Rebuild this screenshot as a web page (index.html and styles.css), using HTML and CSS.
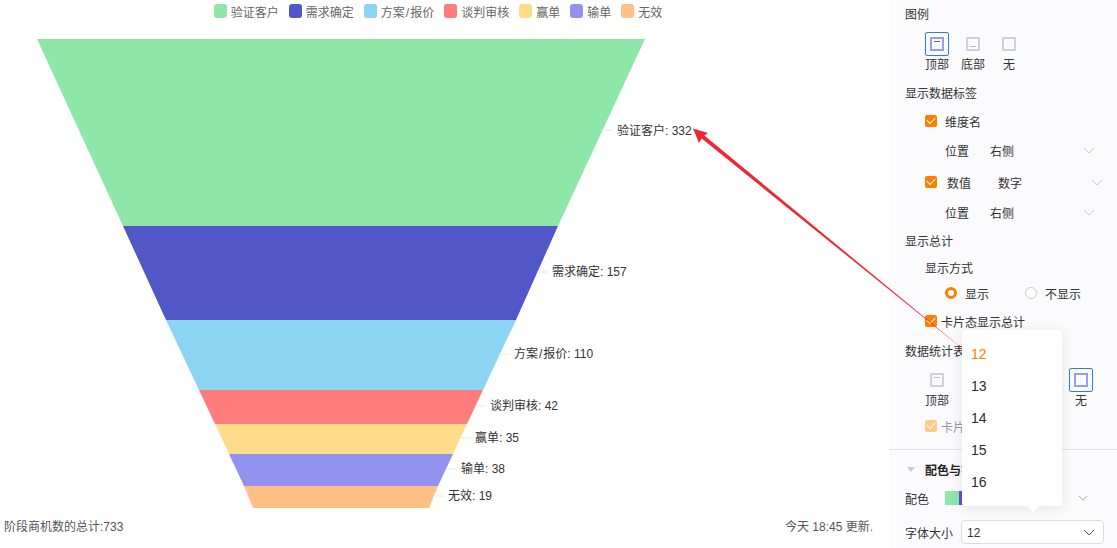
FILE: index.html
```html
<!DOCTYPE html>
<html lang="zh-CN">

<head>
  <meta charset="UTF-8">
  <meta name="viewport" content="width=device-width, initial-scale=1.0">
  <title>漏斗图设置</title>
  <link rel="stylesheet" href="styles.css">
</head>

<body>
  <div class="wrap">
    <div class="chart">
      <div class="legend">
        <div class="legend_item"><span class="dot c1"></span>验证客户</div>
        <div class="legend_item"><span class="dot c2"></span>需求确定</div>
        <div class="legend_item"><span class="dot c3"></span><span>方案<span class="slash">/</span>报价</span></div>
        <div class="legend_item"><span class="dot c4"></span>谈判审核</div>
        <div class="legend_item"><span class="dot c5"></span>赢单</div>
        <div class="legend_item"><span class="dot c6"></span>输单</div>
        <div class="legend_item"><span class="dot c7"></span>无效</div>
      </div>

      <svg class="funnel" width="889" height="488" viewBox="0 24 889 488">
        <polygon fill="#8ee6a8" points="37,39 645,39 558,226 123,226" />
        <polygon fill="#5257c8" points="123,226 558,226 516,320 166,320" />
        <polygon fill="#8bd4f2" points="166,320 516,320 483,390 199,390" />
        <polygon fill="#ff7c7c" points="199,390 483,390 467,424 215,424" />
        <polygon fill="#ffdc8a" points="215,424 467,424 453,454 229,454" />
        <polygon fill="#9193ee" points="229,454 453,454 438,486 244,486" />
        <polygon fill="#ffbf85" points="244,486 438,486 429,508 253,508" />

        <g class="leader">
          <line x1="601" y1="130" x2="612" y2="130" />
          <line x1="537" y1="272" x2="548" y2="272" />
          <line x1="499" y1="354" x2="510" y2="354" />
          <line x1="475" y1="406" x2="486" y2="406" />
          <line x1="460" y1="438" x2="471" y2="438" />
          <line x1="446" y1="469" x2="457" y2="469" />
          <line x1="433" y1="496" x2="444" y2="496" />
        </g>

        <g class="label">
          <text x="617" y="135">验证客户: 332</text>
          <text x="552" y="276">需求确定: 157</text>
          <text x="514" y="358">方案<tspan dx="1">/</tspan><tspan dx="1">报价: 110</tspan></text>
          <text x="490" y="410">谈判审核: 42</text>
          <text x="475" y="442">赢单: 35</text>
          <text x="461" y="473">输单: 38</text>
          <text x="448" y="500">无效: 19</text>
        </g>
      </svg>

      <div class="footer">
        <div>阶段商机数的总计:733</div>
        <div>今天 18:45 更新.</div>
      </div>
    </div>

    <div class="panel">
      <div class="row first">图例</div>
      <div class="pos_group">
        <div class="pos_item">
          <div class="pos_box active"><span class="pos_icon top"></span></div>顶部
        </div>
        <div class="pos_item">
          <div class="pos_box"><span class="pos_icon bottom"></span></div>底部
        </div>
        <div class="pos_item">
          <div class="pos_box"><span class="pos_icon"></span></div>无
        </div>
      </div>

      <div class="row mt6">显示数据标签</div>
      <div class="row mt1 indent"><span class="check"></span><span class="check_text">维度名</span></div>
      <div class="row mt1 indent2">
        <span class="field_name">位置</span><span>右侧</span>
        <svg class="chev" width="12" height="7" viewBox="0 0 12 7"><path d="M1 1l5 5 5-5" /></svg>
      </div>
      <div class="row mt4 indent">
        <span class="check"></span><span class="check_text wide">数值</span><span>数字</span>
        <svg class="chev far" width="12" height="7" viewBox="0 0 12 7"><path d="M1 1l5 5 5-5" /></svg>
      </div>
      <div class="row mt2 indent2">
        <span class="field_name">位置</span><span>右侧</span>
        <svg class="chev" width="12" height="7" viewBox="0 0 12 7"><path d="M1 1l5 5 5-5" /></svg>
      </div>

      <div class="row">显示总计</div>
      <div class="row back1 indent">显示方式</div>
      <div class="row back2 indent2">
        <span class="radio on"></span><span class="radio_text">显示</span>
        <span class="radio"></span><span class="radio_text">不显示</span>
      </div>
      <div class="row indent"><span class="check"></span><span class="check_text near">卡片态显示总计</span></div>

      <div class="row mt1">数据统计表格</div>
      <div class="pos_group spread">
        <div class="pos_item">
          <div class="pos_box"><span class="pos_icon top"></span></div>顶部
        </div>
        <div class="pos_item">
          <div class="pos_box"><span class="pos_icon bottom"></span></div>底部
        </div>
        <div class="pos_item">
          <div class="pos_box active"><span class="pos_icon"></span></div>无
        </div>
      </div>
      <div class="row mt4 indent muted"><span class="check light"></span><span class="check_text near">卡片态显示总计</span></div>

      <div class="divider"></div>

      <div class="row section"><span class="tri"></span>配色与字体</div>
      <div class="row mt1">
        <span class="field_name">配色</span>
        <div class="colors">
          <span class="c1"></span><span class="c2"></span><span class="c3"></span><span class="c4"></span><span class="c5"></span><span class="c6"></span><span class="c7"></span>
        </div>
        <svg class="chev color_chev" width="10" height="6" viewBox="0 0 12 7"><path d="M1 1l5 5 5-5" /></svg>
      </div>
      <div class="row mt6">
        <span class="size_name">字体大小</span>
        <div class="select"><span class="select_value">12</span>
          <svg class="chev dark" width="12" height="7" viewBox="0 0 12 7"><path d="M1 1l5 5 5-5" /></svg>
        </div>
      </div>

      <div class="popup">
        <div class="popup_item selected">12</div>
        <div class="popup_item">13</div>
        <div class="popup_item">14</div>
        <div class="popup_item">15</div>
        <div class="popup_item">16</div>
      </div>
    </div>

    <svg class="arrow" width="1117" height="548" viewBox="0 0 1117 548">
      <polygon fill="#ee2733" points="972,356.5 704.3,135.5 708,133 693,128.5 699,143 701.7,138.5" />
    </svg>
  </div>
</body>

</html>
```

FILE: styles.css
```css
* {
  box-sizing: border-box;
}

html,
body {
  margin: 0;
  height: 100%;
  overflow: hidden;
}

body {
  font-family: "Liberation Sans", "Noto Sans CJK SC", sans-serif;
  font-size: 12px;
  color: #333;
  background-color: white;
}

.wrap {
  display: flex;
  position: relative;
  width: 1117px;
  height: 548px;
  overflow: hidden;
}

.chart {
  width: 889px;
  flex-shrink: 0;
}

.legend {
  display: flex;
  justify-content: center;
  gap: 10px;
  height: 22px;
  margin-bottom: 2px;
  padding-right: 13px;
  color: #666;
}

.legend_item {
  display: flex;
  align-items: center;
  gap: 4px;
}

.slash {
  padding: 0 1px;
}

.dot {
  width: 13px;
  height: 14px;
  border-radius: 3px;
}

.c1 { background-color: #8ee6a8; }
.c2 { background-color: #5257c8; }
.c3 { background-color: #8bd4f2; }
.c4 { background-color: #ff7c7c; }
.c5 { background-color: #ffdc8a; }
.c6 { background-color: #9193ee; }
.c7 { background-color: #ffbf85; }

.funnel {
  display: block;
}

.leader line {
  stroke: #e6e7ee;
  stroke-width: 1;
}

.label text {
  font-size: 12px;
  fill: #333;
}

.footer {
  display: flex;
  justify-content: space-between;
  align-items: center;
  height: 27px;
  padding: 0 16px 0 4px;
  color: #555;
}

.panel {
  position: relative;
  flex: 1;
  background-color: #fbfbfd;
}

.row {
  display: flex;
  align-items: center;
  height: 28px;
  padding-left: 16px;
  white-space: nowrap;
}

.row.first {
  padding-bottom: 2px;
}

.mt1 { margin-top: 1px; }
.mt2 { margin-top: 2px; }
.mt4 { margin-top: 4px; }
.mt6 { margin-top: 6px; }
.back1 { margin-top: -1px; }
.back2 { margin-top: -2px; }

.indent {
  padding-left: 36px;
}

.indent2 {
  padding-left: 56px;
}

.muted {
  color: #999;
}

.pos_group {
  display: flex;
  gap: 12px;
  margin-top: 4px;
  padding-left: 36px;
}

.pos_group.spread {
  gap: 48px;
}

.pos_item {
  display: flex;
  flex-direction: column;
  align-items: center;
  width: 24px;
  height: 40px;
  line-height: 18px;
  white-space: nowrap;
}

.pos_box {
  display: flex;
  align-items: center;
  justify-content: center;
  width: 24px;
  height: 24px;
  flex-shrink: 0;
  border: 1px solid transparent;
  border-radius: 2px;
}

.pos_box.active {
  border-color: #2b7bf6;
}

.pos_icon {
  position: relative;
  width: 14px;
  height: 14px;
  border: 2px solid #d0d1da;
}

.active .pos_icon {
  border-color: #9a9cf2;
}

.pos_icon.top::after,
.pos_icon.bottom::after {
  content: "";
  position: absolute;
  left: 2px;
  right: 2px;
  height: 1px;
  background-color: #b9bac5;
}

.pos_icon.top::after {
  top: 2px;
}

.pos_icon.bottom::after {
  bottom: 2px;
}

.active .pos_icon.top::after {
  background-color: #5257c8;
}

.check {
  position: relative;
  width: 12px;
  height: 12px;
  flex-shrink: 0;
  border-radius: 2px;
  background-color: #ff7d00;
}

.check::after {
  content: "";
  position: absolute;
  left: 2px;
  top: 2px;
  width: 7px;
  height: 4px;
  border-left: 1px solid white;
  border-bottom: 1px solid white;
  transform: rotate(-45deg);
}

.check.light {
  background-color: #ffcb85;
}

.check_text {
  margin-left: 8px;
}

.check_text.wide {
  width: 51px;
  margin-left: 10px;
}

.check_text.near {
  margin-left: 4px;
}

.field_name {
  width: 45px;
  flex-shrink: 0;
}

.row:not(.indent2) > .field_name {
  width: 40px;
}

.chev {
  fill: none;
  stroke: #c6c8d4;
  stroke-width: 1;
  position: absolute;
  left: 194px;
}

.chev.far {
  left: 202px;
}

.chev.color_chev {
  left: 189px;
  stroke: #a99a8c;
}

.chev.dark {
  left: 194px;
  stroke: #555;
}

.radio {
  width: 12px;
  height: 12px;
  flex-shrink: 0;
  border: 1px solid #c9cad3;
  border-radius: 50%;
  background-color: white;
}

.radio.on {
  border: 3px solid #ff7d00;
}

.radio_text {
  width: 68px;
  padding-left: 8px;
}

.divider {
  height: 1px;
  margin-top: 9px;
  background-color: #e2e3ea;
}

.section {
  margin-top: 5px;
  font-weight: bold;
  color: #222;
}

.tri {
  width: 0;
  height: 0;
  margin: 0 10px 0 2px;
  border-left: 4px solid transparent;
  border-right: 4px solid transparent;
  border-top: 5px solid #c6c8d4;
}

.colors {
  display: flex;
  height: 14px;
}

.colors span {
  width: 14px;
  height: 14px;
}

.size_name {
  width: 56px;
  flex-shrink: 0;
}

.select {
  display: flex;
  align-items: center;
  width: 143px;
  height: 24px;
  padding-left: 5px;
  border: 1px solid #d8dae5;
  border-radius: 4px;
  background-color: white;
}

.select_value {
  padding-top: 1px;
}

.popup {
  position: absolute;
  left: 73px;
  top: 330px;
  width: 100px;
  height: 176px;
  padding-top: 8px;
  border-radius: 3px;
  background-color: white;
  box-shadow: 0 2px 12px rgba(60, 60, 90, 0.12);
}

.popup::after {
  content: "";
  position: absolute;
  left: 65px;
  bottom: -6px;
  border-left: 6px solid transparent;
  border-right: 6px solid transparent;
  border-top: 6px solid white;
}

.popup_item {
  height: 32px;
  line-height: 32px;
  padding-left: 9px;
  font-size: 14px;
  color: #2b2b33;
}

.popup_item.selected {
  color: #ff7d00;
}

.arrow {
  position: absolute;
  left: 0;
  top: 0;
  pointer-events: none;
}
```
